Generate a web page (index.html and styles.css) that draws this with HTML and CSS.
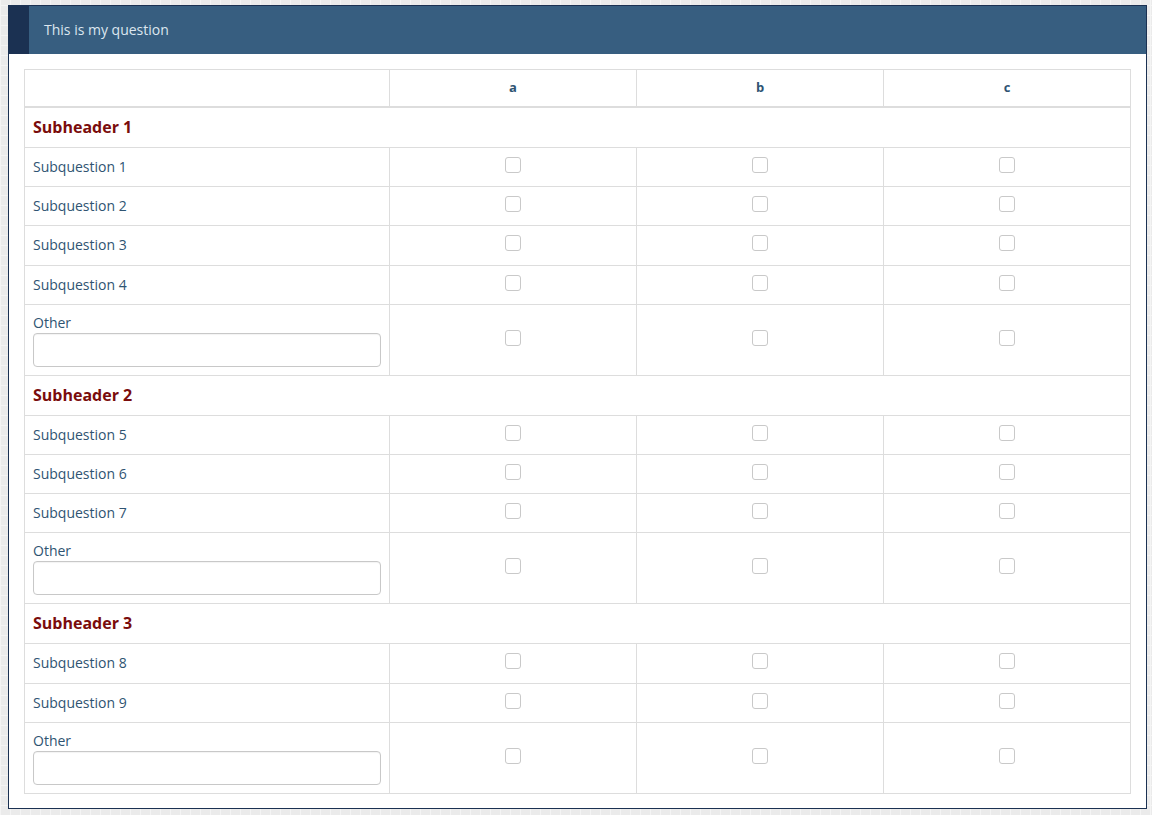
FILE: index.html
```html
<!DOCTYPE html>
<html>
<head>
<meta charset="utf-8">
<link rel="stylesheet" href="styles.css">
</head>
<body>
<div class="question">
  <div class="q-header">
    <div class="q-stripe"></div>
    <div class="q-title">This is my question</div>
  </div>
  <div class="q-body">
    <table class="grid">
      <colgroup>
        <col class="c-label"><col class="c-opt"><col class="c-opt"><col class="c-opt">
      </colgroup>
      <thead>
        <tr class="head-row"><th></th><th>a</th><th>b</th><th>c</th></tr>
      </thead>
      <tbody>
        <tr class="sub-row"><td colspan="4">Subheader 1</td></tr>
        <tr class="q-row"><td class="lbl">Subquestion 1</td><td><span class="cb"></span></td><td><span class="cb"></span></td><td><span class="cb"></span></td></tr>
        <tr class="q-row"><td class="lbl">Subquestion 2</td><td><span class="cb"></span></td><td><span class="cb"></span></td><td><span class="cb"></span></td></tr>
        <tr class="q-row r40"><td class="lbl">Subquestion 3</td><td><span class="cb"></span></td><td><span class="cb"></span></td><td><span class="cb"></span></td></tr>
        <tr class="q-row"><td class="lbl">Subquestion 4</td><td><span class="cb"></span></td><td><span class="cb"></span></td><td><span class="cb"></span></td></tr>
        <tr class="other-row"><td class="lbl"><div class="other-label">Other</div><input class="other-input" type="text"></td><td><span class="cb"></span></td><td><span class="cb"></span></td><td><span class="cb"></span></td></tr>
        <tr class="sub-row"><td colspan="4">Subheader 2</td></tr>
        <tr class="q-row"><td class="lbl">Subquestion 5</td><td><span class="cb"></span></td><td><span class="cb"></span></td><td><span class="cb"></span></td></tr>
        <tr class="q-row"><td class="lbl">Subquestion 6</td><td><span class="cb"></span></td><td><span class="cb"></span></td><td><span class="cb"></span></td></tr>
        <tr class="q-row"><td class="lbl">Subquestion 7</td><td><span class="cb"></span></td><td><span class="cb"></span></td><td><span class="cb"></span></td></tr>
        <tr class="other-row"><td class="lbl"><div class="other-label">Other</div><input class="other-input" type="text"></td><td><span class="cb"></span></td><td><span class="cb"></span></td><td><span class="cb"></span></td></tr>
        <tr class="sub-row"><td colspan="4">Subheader 3</td></tr>
        <tr class="q-row r40"><td class="lbl">Subquestion 8</td><td><span class="cb"></span></td><td><span class="cb"></span></td><td><span class="cb"></span></td></tr>
        <tr class="q-row"><td class="lbl">Subquestion 9</td><td><span class="cb"></span></td><td><span class="cb"></span></td><td><span class="cb"></span></td></tr>
        <tr class="other-row"><td class="lbl"><div class="other-label">Other</div><input class="other-input" type="text"></td><td><span class="cb"></span></td><td><span class="cb"></span></td><td><span class="cb"></span></td></tr>
      </tbody>
    </table>
  </div>
</div>
</body>
</html>
```
FILE: styles.css
```css
html, body {
  margin: 0;
  padding: 0;
}
body {
  background-color: #ebebeb;
  background-image:
    repeating-linear-gradient(0deg, #f4f4f4 0 1px, transparent 1px 10px),
    repeating-linear-gradient(90deg, #f4f4f4 0 1px, transparent 1px 10px);
  font-family: "Open Sans", "Noto Sans", sans-serif;
  font-size: 14px;
  padding: 5px 5px 7px 8px;
  min-height: 815px;
  box-sizing: border-box;
}
.question {
  width: 1139px;
  box-sizing: border-box;
  border: 1px solid #1b3152;
  background: #fff;
}
.q-header {
  display: flex;
  height: 48px;
  background: #375e80;
}
.q-stripe {
  width: 20px;
  background: #1b3152;
}
.q-title {
  padding-left: 15px;
  line-height: 48px;
  color: #dce6ef;
  font-size: 14px;
}
.q-body {
  padding: 15px 15px 14px 15px;
}
.grid {
  width: 100%;
  border-collapse: collapse;
  table-layout: fixed;
  border: 1px solid #dddddd;
}
.c-label { width: 365px; }
.grid th, .grid td {
  border: 1px solid #dddddd;
  padding: 0 8px 2px;
}
.head-row th {
  height: 34px;
  border-bottom: 2px solid #dddddd;
  font-size: 13px;
  font-weight: 700;
  color: #2f5472;
  text-align: center;
  vertical-align: middle;
}
.sub-row td {
  height: 37px;
  font-size: 16px;
  font-weight: 700;
  color: #7a0c0c;
  vertical-align: middle;
}
.q-row td {
  height: 36px;
  text-align: center;
  vertical-align: middle;
}
.q-row.r40 td {
  height: 37px;
}
.grid td.lbl {
  text-align: left;
  color: #2f5472;
  font-size: 14px;
}
.other-row td {
  height: 67px;
  text-align: center;
  vertical-align: middle;
}
.grid .other-row td.lbl {
  padding: 8px;
  vertical-align: top;
  height: auto;
}
.other-label {
  line-height: 20px;
}
.other-input {
  display: block;
  width: 100%;
  height: 34px;
  box-sizing: border-box;
  border: 1px solid #c8c8c8;
  border-radius: 4px;
  background: #fff;
  margin: 0;
  box-shadow: inset 0 1px 1px rgba(0,0,0,0.05);
}
.cb {
  display: inline-block;
  width: 16px;
  height: 16px;
  box-sizing: border-box;
  border: 1px solid #c9c9c9;
  border-radius: 3px;
  background: #fff;
  vertical-align: middle;
  position: relative;
  top: -3px;
}
```
